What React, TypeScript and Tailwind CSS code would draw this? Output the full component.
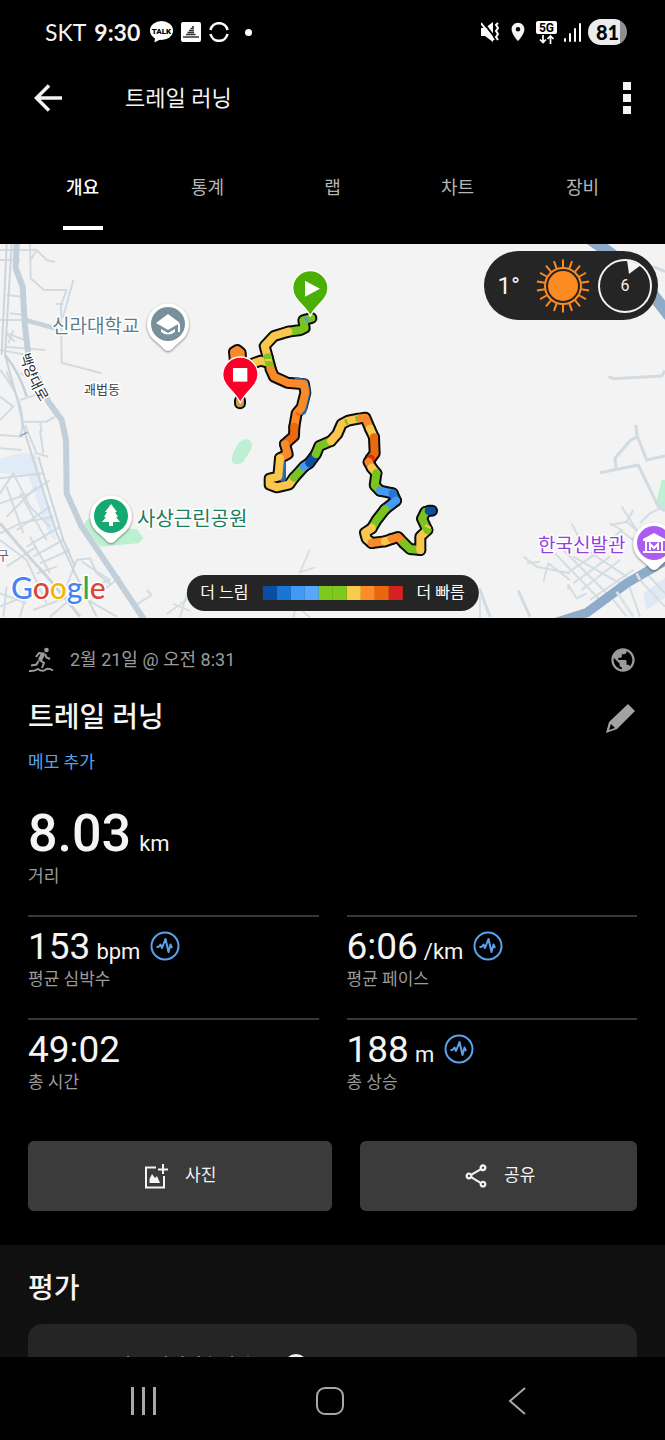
import type { ReactNode } from "react";
import { MdLocationOn, MdOutlineShare, MdPublic } from "react-icons/md";

const tabs = ["개요", "통계", "랩", "차트", "장비"];

const paceColors = [
  "bg-[#0a4da2]",
  "bg-[#1976d2]",
  "bg-[#4298f7]",
  "bg-[#57a8fb]",
  "bg-[#7fc91e]",
  "bg-[#7fc91e]",
  "bg-[#f9cb4b]",
  "bg-[#fb8c28]",
  "bg-[#ea670d]",
  "bg-[#d52121]",
];

const stats = [
  { value: "153", unit: "bpm", label: "평균 심박수", hasChart: true },
  { value: "6:06", unit: "/km", label: "평균 페이스", hasChart: true },
  { value: "49:02", unit: "", label: "총 시간", hasChart: false },
  { value: "188", unit: "m", label: "총 상승", hasChart: true },
];

const GREEN = "#7ac41f";
const YELLOW = "#f9c74b";
const ORANGE = "#f98a29";
const BURNT = "#e8690f";
const SKY = "#4899f5";
const BLUE = "#0b4fa0";

const route: [string, string][] = [
  [YELLOW, "160,340 182,332 205,338"],
  [ORANGE, "106,345 102,306 112,300 122,308 124,345"],
  ["#c9a04a", "120,452 120,460"],
  [GREEN, "334,204 310,211 314,234 302,240 265,245"],
  [YELLOW, "265,245 222,258 194,288 203,322"],
  [GREEN, "203,322 212,355"],
  [ORANGE, "212,358 222,380 262,398 312,403 316,428 305,472 290,490 283,530"],
  [BURNT, "283,530 282,558 255,582"],
  [ORANGE, "255,582 263,612 240,625"],
  [YELLOW, "240,625 235,680 209,686 209,704 230,712 268,703 282,683"],
  [GREEN, "282,683 312,650"],
  [SKY, "312,650 328,639"],
  [BLUE, "328,639 348,612"],
  [GREEN, "348,612 358,588 393,573"],
  [YELLOW, "393,573 412,552 425,522 445,512 475,506"],
  [ORANGE, "482,505 496,503 510,536"],
  [YELLOW, "510,536 522,562"],
  [BURNT, "522,562 524,610 512,626"],
  ["#dc2b1a", "512,626 506,636"],
  [ORANGE, "506,636 515,653"],
  [YELLOW, "515,653 529,670"],
  [GREEN, "529,670 524,706 540,722"],
  [SKY, "540,722 578,730"],
  ["#2478d4", "578,730 588,752"],
  [SKY, "588,752 555,778"],
  [GREEN, "555,778 530,810 515,835"],
  [YELLOW, "515,835 495,848 500,866 515,879"],
  [ORANGE, "515,879 555,874"],
  [YELLOW, "555,874 575,867"],
  [ORANGE, "575,867 594,861 612,880"],
  [GREEN, "612,880 630,897 661,900"],
  [YELLOW, "661,900 661,860 682,840"],
  [GREEN, "682,840 666,806 676,786"],
  [BLUE, "686,782 696,782"],
];

const speckles: [string, string][] = [
  [GREEN, "436,508 442,524"],
  [GREEN, "469,498 471,515"],
  [YELLOW, "194,330 216,330"],
  [SKY, "315,202 325,216"],
  [YELLOW, "512,822 526,830"],
  [YELLOW, "676,826 692,834"],
  [BURNT, "288,488 300,496"],
];

const leftRoads = [
  "M90 12 L92 115 L132 150 L200 150 L183 195 L185 368 L305 400",
  "M220 120 L188 235",
  "M168 192 L190 192",
  "M92 60 L110 30 L140 60 L165 66",
  "M0 60 L60 60 M0 30 L110 30 M20 165 L70 170 M30 220 L75 225 M0 240 L70 240",
  "M20 280 L75 300 M15 320 L135 330 M40 270 L25 310 M22 285 L45 305",
  "M0 330 L80 345 M20 395 L50 470 M60 480 L120 460 M85 410 L60 400",
  "M0 390 Q90 500 60 590 M0 470 L40 500 L0 540",
  "M70 545 L140 545 L165 530 M75 555 L110 640 L145 650 M120 570 L130 640",
  "M0 585 L70 590 M0 625 L65 630 M120 545 L125 575",
  "M0 715 L130 700 M0 760 L40 700 L90 800 L150 860",
  "M0 790 L90 760 L150 720 M20 830 L110 740 M50 870 L150 800",
  "M0 880 L60 850 L160 830 M60 760 L140 900 M20 740 L70 880",
  "M80 920 L180 860 M100 950 L190 900 M120 970 L210 930 M150 1000 L90 890",
  "M0 900 L80 960 L140 1090 M20 980 L110 920 M110 1000 L170 980",
  "M200 1040 L230 960 L270 955 L290 1000 L335 1035",
  "M245 965 L330 1020 L290 1035 M310 1050 L360 1010",
  "M0 1060 L80 1090 M0 1100 L120 1050 M20 1040 L10 1130 M80 1060 L60 1130",
  "M100 1110 L230 1060 L350 1130 M150 1130 L220 1070 M400 1100 L455 1065 L440 1050",
];

const rightRoads = [
  "M640 80 L675 95",
  "M505 410 L520 416 L665 408 L675 392",
  "M587 555 L592 590 L570 602 L525 655 L528 685",
  "M592 590 L620 660 L675 648",
  "M480 698 L595 675 L655 800 L675 812",
  "M235 1052 L270 1130 M118 1045 L150 1130",
];

const smallRoads = [
  "M250 950 L290 980 L390 1000 M260 970 L300 965 M310 1025 L325 970 L390 1020",
  "M345 940 L480 1080 M370 930 L500 1060 M400 950 L540 1030 M440 930 L560 1010",
  "M380 1000 L470 940 M400 1030 L510 950 M425 1050 L540 960 M450 1080 L580 990",
  "M385 1050 L385 1035 L410 1075 L440 1060 M395 850 L420 900",
  "M510 850 L545 870 L500 910 M545 800 L590 870 M510 855 L560 845 L600 880",
  "M580 810 L560 845 M600 850 L630 820 L670 800 M540 870 L580 900",
  "M565 1030 L600 1130 M590 1010 L675 1100 M620 1000 L675 1060 M520 1080 L560 1130",
];

// side streets below the legend and under the route
const centerRoads = [
  "M930 1120 L860 1060 L890 1020 M880 1120 L900 1040 M540 1120 L560 1050 M500 1110 L570 1060",
  "M520 1080 L570 1100 M1440 1060 L1440 1122 M930 915 L900 985 L945 970",
];

function RoadMap() {
  return (
    <svg viewBox="0 0 665 374" className="block w-full" role="img" aria-label="트레일 러닝 경로 지도">
      <rect width="665" height="374" fill="#f4f3f4" />

      <g transform="scale(.33333)" fill="none" stroke="#d3dde2" strokeWidth="5">
        {centerRoads.map((d) => (
          <path key={d} d={d} />
        ))}
      </g>

      <g transform="scale(.33333) translate(0 -12)" fill="none" strokeLinejoin="round">
        <path d="M0 655 L60 640 L105 640 L170 905 L145 880 L85 705 L0 700Z" fill="#e1ebf8" />
        <path d="M265 835 L340 860 L412 868 L430 895 L415 910 L300 920 L250 855Z" fill="#bdf0d2" />
        <g stroke="#d1dbe1" strokeWidth="6">
          {leftRoads.map((d) => (
            <path key={d} d={d} />
          ))}
        </g>
        <g stroke="#cbd5db" strokeWidth="6">
          <path d="M35 12 L15 345 L50 470 L75 580 L170 880 L225 1000 L290 1130" />
          <path d="M20 12 L5 345 M115 650 L190 900 L225 980" />
        </g>
        <path d="M0 850 L60 920 L150 1020 L240 1130" stroke="#cbd5db" strokeWidth="9" />
        <path d="M75 240 L165 265" stroke="#c6d2da" strokeWidth="14" />
        <path d="M15 345 Q60 400 80 470" stroke="#c6d2da" strokeWidth="8" />
        <path
          d="M50 12 L47 85 L68 140 L74 250 L85 345 L145 485 L185 540 L198 600 L200 760 L245 860 L320 970 L440 1150"
          stroke="#c2cfd8"
          strokeWidth="18"
        />
        <path d="M60 588 L82 577" stroke="#7b9cc2" strokeWidth="4" />
      </g>

      <g transform="scale(.33333) translate(1320 -12)" fill="none" strokeLinejoin="round">
        <path d="M440 -10 Q560 70 610 130 T690 230" stroke="#8eabc9" strokeWidth="36" />
        <path d="M665 720 L680 720 L680 820 L648 790Z" fill="#bdf0d2" />
        <path d="M610 1060 L680 1010 L680 1070 L620 1110Z" fill="#dfe9f6" />
        <g stroke="#d1dbe1" strokeWidth="9">
          {rightRoads.map((d) => (
            <path key={d} d={d} />
          ))}
        </g>
        <g stroke="#d3dde2" strokeWidth="6">
          {smallRoads.map((d) => (
            <path key={d} d={d} />
          ))}
        </g>
        <path d="M340 1150 L440 1118 L560 1030 L680 960" stroke="#8eabc9" strokeWidth="28" />
        <path d="M530 1055 L580 1130 M600 1020 L590 1000" stroke="#dbe2e8" strokeWidth="8" />
      </g>

      <g transform="scale(.33333) translate(600 18)" fill="none" strokeLinecap="round" strokeLinejoin="round">
        <path
          d="M115 580 Q133 560 152 572 Q160 584 152 600 L130 635 Q113 650 98 638 Q92 626 100 608Z"
          fill="#bdf0d2"
        />
        <g stroke="#0c0c0c" strokeWidth="36">
          {route.map(([, points]) => (
            <polyline key={points} points={points} />
          ))}
        </g>
        <path d="M292 392 L314 397 L322 425 L309 485 M248 640 L248 685" stroke="#2b68ab" strokeWidth="20" />
        <g strokeWidth="24">
          {route.map(([color, points]) => (
            <polyline key={points} points={points} stroke={color} />
          ))}
        </g>
        <g strokeWidth="7" strokeLinecap="butt">
          {speckles.map(([color, points]) => (
            <polyline key={points} points={points} stroke={color} />
          ))}
        </g>
        <path
          d="M331 199 C318 168 278 150 278 115 A53 53 0 0 1 384 115 C384 150 344 168 331 199Z"
          fill="#4caf04"
          stroke="#fff"
          strokeWidth="4"
        />
        <path d="M315 92 L360 116 L315 140Z" fill="#fff" />
        <path
          d="M121 459 C108 427 68 409 68 374 A53 53 0 0 1 174 374 C174 409 134 427 121 459Z"
          fill="#fa0028"
          stroke="#fff"
          strokeWidth="4"
        />
        <rect x="99" y="354" width="43" height="41" fill="#fff" />
      </g>

      <MapPin x={168} y={80} color="#78909c">
        <path d="M-12 -1 L0 -10 L12 -1 L0 6Z M-7 5 L0 9 L7 5 L7 8 Q0 13 -7 8Z M10 0 h2 v8 h-2Z" />
      </MapPin>
      <MapPin x={111} y={272} color="#16a872">
        <path d="M0 -12 L6 -4 L4 -4 L7 1 L5 1 L9 6 L2 6 L2 10 L-2 10 L-2 6 L-9 6 L-5 1 L-7 1 L-4 -4 L-6 -4Z" />
      </MapPin>
      <MapPin x={654} y={299} color="#ac5cf0">
        <path
          fillRule="evenodd"
          d="M-11 -4 L0 -10 L11 -4 L11 -2 L9 -2 L9 8 L11 8 L11 10 L-11 10 L-11 8 L-9 8 L-9 -2 L-11 -2Z M-7 -1 L-7 8 L7 8 L7 -1Z"
        />
        <path d="M-4 7 L-4 1 L0 5 L4 1 L4 7" fill="none" stroke="#fff" strokeWidth="2" />
      </MapPin>

      <g className="[paint-order:stroke]" stroke="#fff" strokeWidth="3" strokeLinejoin="round">
        <text x="52" y="89" fontSize="19" fill="#607d8b">신라대학교</text>
        <text x="84" y="150" fontSize="13" fill="#3c4043">괘법동</text>
        <text x="137" y="282" fontSize="20" fill="#188058">사상근린공원</text>
        <text x="538" y="308" fontSize="19" fill="#9440dd">한국신발관</text>
        <text x="-3" y="316" fontSize="13" fill="#5f6368">구</text>
        <path id="avenue" d="M20 111 Q27 138 44 164" fill="none" stroke="none" />
        <text fontSize="14" fill="#24292e">
          <textPath href="#avenue">백양대로</textPath>
        </text>
      </g>
      <text
        x="11"
        y="355"
        fontSize="30"
        className="font-[Lato] font-medium [paint-order:stroke]"
        stroke="#fff"
        strokeWidth="3"
      >
        <tspan fill="#4285f4">G</tspan>
        <tspan fill="#db4437">o</tspan>
        <tspan fill="#f4b400">o</tspan>
        <tspan fill="#4285f4">g</tspan>
        <tspan fill="#34a853">l</tspan>
        <tspan fill="#db4437">e</tspan>
      </text>
    </svg>
  );
}

function MapPin({ x, y, color, children }: { x: number; y: number; color: string; children: ReactNode }) {
  return (
    <g transform={`translate(${x} ${y})`} fill="#fff">
      <path
        d="M0 27 Q-3 27 -6 23 L-15 15 A21 21 0 1 1 15 15 L6 23 Q3 27 0 27Z"
        className="drop-shadow-[0_1px_1px_rgba(0,0,0,0.45)]"
      />
      <circle r="17" fill={color} />
      {children}
    </g>
  );
}

function WeatherBadge() {
  return (
    <div className="absolute top-[7px] right-[7px] flex h-[69px] items-center gap-2 rounded-full bg-[#252525] pr-1.5 pl-3.5 text-[#f4f4f4]">
      <span className="pr-2 text-2xl">1°</span>
      <svg viewBox="-27 -27 54 54" className="size-[54px]" stroke="#fb8a21" strokeWidth="2" aria-hidden="true">
        {Array.from({ length: 18 }, (_, i) => (
          <path key={i} d="M0 -18.5 V-26.5" transform={`rotate(${i * 20})`} />
        ))}
        <circle r="18" fill="none" />
        <circle r="15" fill="#fb8a21" stroke="none" />
      </svg>
      <div className="relative grid size-[54px] place-items-center">
        <svg viewBox="-27 -27 54 54" className="absolute inset-0" aria-hidden="true">
          <circle r="26" fill="none" stroke="#f4f4f4" strokeWidth="2" />
          <path d="M2 -26 L16 -21 L4 -12Z" fill="#f4f4f4" />
        </svg>
        <span className="text-base">6</span>
      </div>
    </div>
  );
}

function PaceLegend() {
  return (
    <div className="absolute bottom-[7px] left-1/2 flex h-9 -translate-x-1/2 items-center gap-3.5 rounded-full bg-[#252525] px-3.5 text-base whitespace-nowrap text-white">
      <span>더 느림</span>
      <div className="flex">
        {paceColors.map((color, i) => (
          <span key={i} className={`h-3.5 w-3.5 ${color}`} />
        ))}
      </div>
      <span>더 빠름</span>
    </div>
  );
}

function ChartButton({ label }: { label: string }) {
  return (
    <button type="button" aria-label={`${label} 차트`} className="ml-1 self-center">
      <svg viewBox="0 0 30 30" className="size-[30px]" fill="none" stroke="#5aa2ee" strokeWidth="2" strokeLinejoin="round">
        <circle cx="15" cy="15" r="13.5" />
        <path d="M6.500 16 H8.500 L10.500 13.500 L12 17 L15.500 8 L18.500 21 L20.500 13.500 L22 17" />
      </svg>
    </button>
  );
}

function StatusBar() {
  return (
    <div className="flex h-16 shrink-0 items-center justify-between pr-[38px] pl-[45px]">
      <div className="flex items-center gap-2">
        <span className="font-[Lato] text-[23px]">SKT</span>
        <span className="font-[Lato] text-[23px] font-bold">9:30</span>
        <svg viewBox="0 0 23 22" className="ml-0.5 h-[22px] w-[23px]" aria-hidden="true">
          <ellipse cx="11.5" cy="9.500" rx="11.500" ry="9.500" fill="#fff" />
          <path d="M5 16 L4.500 21.500 L11 18Z" fill="#fff" />
          <text x="11.500" y="12.500" fontSize="8" fontWeight="900" textAnchor="middle" fill="#000">TALK</text>
        </svg>
        <svg viewBox="0 0 20 20" className="size-5" aria-hidden="true">
          <rect width="20" height="20" rx="2" fill="#fff" />
          <path d="M2 15 h16 M5 12.500 h9.500 M6.500 10.500 h6.500 M8 8.500 h5 M9.500 6.500 h3 M12 4 v3" stroke="#333" strokeWidth="1.600" />
        </svg>
        <svg viewBox="0 0 20 20" className="size-5" fill="none" stroke="#fff" strokeWidth="2.500" aria-hidden="true">
          <path d="M1.500 8 A8.700 8.700 0 0 1 18.500 8 M1.500 12 A8.700 8.700 0 0 0 18.500 12" />
        </svg>
        <span className="ml-2 size-[7px] rounded-full bg-white" />
      </div>

      <div className="flex items-center gap-[7px]">
        <svg viewBox="0 0 19 20" className="h-5 w-[19px]" aria-hidden="true">
          <path d="M0 6 h4 L12 0 V20 L4 14 H0Z" fill="#fff" />
          <path d="M2 0 L15 17" stroke="#000" strokeWidth="2" />
          <path d="M0 1 L13 18" stroke="#fff" strokeWidth="2" />
          <path d="M17 1 l-2 2 l2 3 l-2 3 l2 3 l-2 3 l2 3" fill="none" stroke="#fff" strokeWidth="2" />
        </svg>
        <MdLocationOn className="size-[22px]" aria-hidden="true" />
        <svg viewBox="0 0 21 23" className="h-[23px] w-[21px]" aria-hidden="true">
          <rect width="21" height="13" rx="2" fill="#fff" />
          <text x="10.500" y="11" fontSize="12" fontWeight="700" textAnchor="middle" fill="#000">5G</text>
          <path d="M7 14 V21 M4 18.500 L7 21.500 L10 18.500 M14.500 23 V15 M11.500 18 L14.500 15 L17.500 18" fill="none" stroke="#fff" strokeWidth="1.700" />
        </svg>
        <svg viewBox="0 0 17 19" className="h-[19px] w-[17px]" stroke="#fff" strokeWidth="2" strokeLinecap="round" aria-hidden="true">
          <path d="M1 16 V18 M6 11 V18 M11 6 V18 M16 1 V18" />
        </svg>
        <span className="flex h-[26px] w-[39px] items-center justify-center rounded-full bg-[linear-gradient(90deg,#ececec_82%,#8f8f8f_82%)] font-[Lato] text-[20px] font-black text-black">
          81
        </span>
      </div>
    </div>
  );
}

export default function App() {
  return (
    <div className="flex h-screen flex-col bg-black font-[Roboto,'Noto_Sans_CJK_KR',sans-serif] text-[#f4f4f4]">
      <StatusBar />

      <header className="flex h-[68px] shrink-0 items-center px-7">
        <button type="button" aria-label="뒤로" className="px-1.5">
          <svg viewBox="0 0 29 28" className="h-7 w-[29px]" fill="none" stroke="currentColor" strokeWidth="3.500">
            <path d="M15 1.500 L2.500 14 L15 26.500 M2.500 14 H28" />
          </svg>
        </button>
        <h1 className="ml-14 flex-1 text-[22px]">트레일 러닝</h1>
        <button type="button" aria-label="더보기" className="flex flex-col gap-1 px-1.5">
          <span className="size-2 bg-current" />
          <span className="size-2 bg-current" />
          <span className="size-2 bg-current" />
        </button>
      </header>

      <nav className="grid h-28 shrink-0 grid-cols-5 px-5 pt-8 pb-3.5">
        {tabs.map((tab, i) => (
          <button
            key={tab}
            type="button"
            aria-current={i === 0 ? "page" : undefined}
            className={`flex flex-col items-center justify-between pt-2.5 text-lg ${
              i === 0 ? "font-medium text-white" : "text-[#b5b5b5]"
            }`}
          >
            <span>{tab}</span>
            {i === 0 && <span className="h-1 w-10 bg-white" />}
          </button>
        ))}
      </nav>

      <main className="min-h-0 flex-1 overflow-y-auto [scrollbar-width:none]">
        <div className="relative">
          <RoadMap />
          <WeatherBadge />
          <PaceLegend />
        </div>

        <section className="px-7 pt-6 pb-[34px]">
          <div className="flex h-9 items-center text-[#9b9b9b]">
            <svg viewBox="0 0 26 26" className="size-[26px]" fill="none" stroke="currentColor" strokeWidth="2" aria-hidden="true">
              <circle cx="18.500" cy="3" r="2.300" fill="currentColor" stroke="none" />
              <path d="M8 10 L11 6 L15.500 6.500 L11.500 13 L16 16 L14 21" />
              <path d="M15 7 L12 13" strokeWidth="4" />
              <path d="M17 7 L18.500 10.500 L22 12 M10.500 14 L8.500 17.500 L3 18.500" />
              <path d="M1 24 Q6 24.500 10 22 Q14 25 17 23 Q20 20.500 25 23.500" />
            </svg>
            <p className="ml-4 flex-1 text-lg">2월 21일 @ 오전 8:31</p>
            <MdPublic className="size-7" aria-label="전체 공개" />
          </div>

          <div className="mt-4 flex h-12 items-center justify-between">
            <h2 className="text-[28px] font-medium">트레일 러닝</h2>
            <button type="button" aria-label="이름 편집" className="text-[#a3a3a3]">
              <svg viewBox="0 0 32 32" className="size-8" fill="currentColor">
                <path
                  fillRule="evenodd"
                  d="M23 2 L30 9 L12 27 L1 31 L4 20Z M6 22 L4 28 L10 26Z"
                />
              </svg>
            </button>
          </div>

          <a href="#memo" className="mt-2 block h-6 text-[17px] leading-6 text-[#5aa2ee]">
            메모 추가
          </a>

          <div className="mt-8 flex h-14 items-baseline gap-2 leading-[56px]">
            <span className="text-[52px] font-medium">8.03</span>
            <span className="text-[22px]">km</span>
          </div>
          <p className="mt-0.5 text-[17px] leading-6 text-[#9b9b9b]">거리</p>

          <dl className="mt-[27px] grid grid-cols-2 gap-x-7">
            {stats.map((stat) => (
              <div key={stat.label} className="flex h-[103px] flex-col-reverse justify-end border-t-2 border-[#373737] pt-2">
                <dt className="text-[17px] leading-6 text-[#9b9b9b]">{stat.label}</dt>
                <dd className="flex h-[42px] items-baseline gap-1.5 leading-[44px]">
                  <span className="text-[37px]">{stat.value}</span>
                  {stat.unit && <span className="text-[22px]">{stat.unit}</span>}
                  {stat.hasChart && <ChartButton label={stat.label} />}
                </dd>
              </div>
            ))}
          </dl>

          <div className="mt-5 grid grid-cols-[11fr_10fr] gap-7 text-[17px]">
            <button type="button" className="flex h-[70px] items-center justify-center gap-4 rounded-md bg-[#3b3b3b]">
              <svg viewBox="0 0 25 25" className="size-[25px]" fill="none" stroke="currentColor" strokeWidth="2" aria-hidden="true">
                <path d="M12 3.500 H2 V23.500 H20 V12" />
                <path d="M19 0 V10 M14 5.500 H24" />
                <path d="M5.500 19 V15 L8 10 L11 14 L13 12 L16 19Z" fill="currentColor" stroke="none" />
              </svg>
              사진
            </button>
            <button type="button" className="flex h-[70px] items-center justify-center gap-3.5 rounded-md bg-[#3b3b3b]">
              <MdOutlineShare className="size-7" aria-hidden="true" />
              공유
            </button>
          </div>
        </section>

        <section className="bg-[#101010] px-7 pt-[22px] pb-10">
          <h2 className="text-[28px] leading-[44px] font-medium">평가</h2>
          <div className="mt-[13px] rounded-[14px] bg-[#252525] px-[70px] pt-[30px] pb-8">
            <p className="flex items-center gap-6 text-lg leading-6">
              느낌은 어떠셨습니까?
              <span className="grid size-6 place-items-center rounded-full bg-[#f4f4f4] text-sm text-[#252525]">?</span>
            </p>
          </div>
        </section>
      </main>

      <footer className="grid h-[83px] shrink-0 grid-cols-3 items-center bg-[#020202] pt-1 pr-[55px] pl-[50px] text-[#a8a8a8]">
        <button type="button" aria-label="최근 앱" className="flex justify-center gap-2">
          <span className="h-7 w-[3px] bg-current" />
          <span className="h-7 w-[3px] bg-current" />
          <span className="h-7 w-[3px] bg-current" />
        </button>
        <button type="button" aria-label="홈" className="justify-self-center">
          <span className="block size-7 rounded-[9px] border-2 border-current" />
        </button>
        <button type="button" aria-label="이전" className="justify-self-center">
          <svg viewBox="0 0 18 28" className="h-7 w-[18px]" fill="none" stroke="currentColor" strokeWidth="2">
            <path d="M17 1 L2 14 L17 27" />
          </svg>
        </button>
      </footer>
    </div>
  );
}
